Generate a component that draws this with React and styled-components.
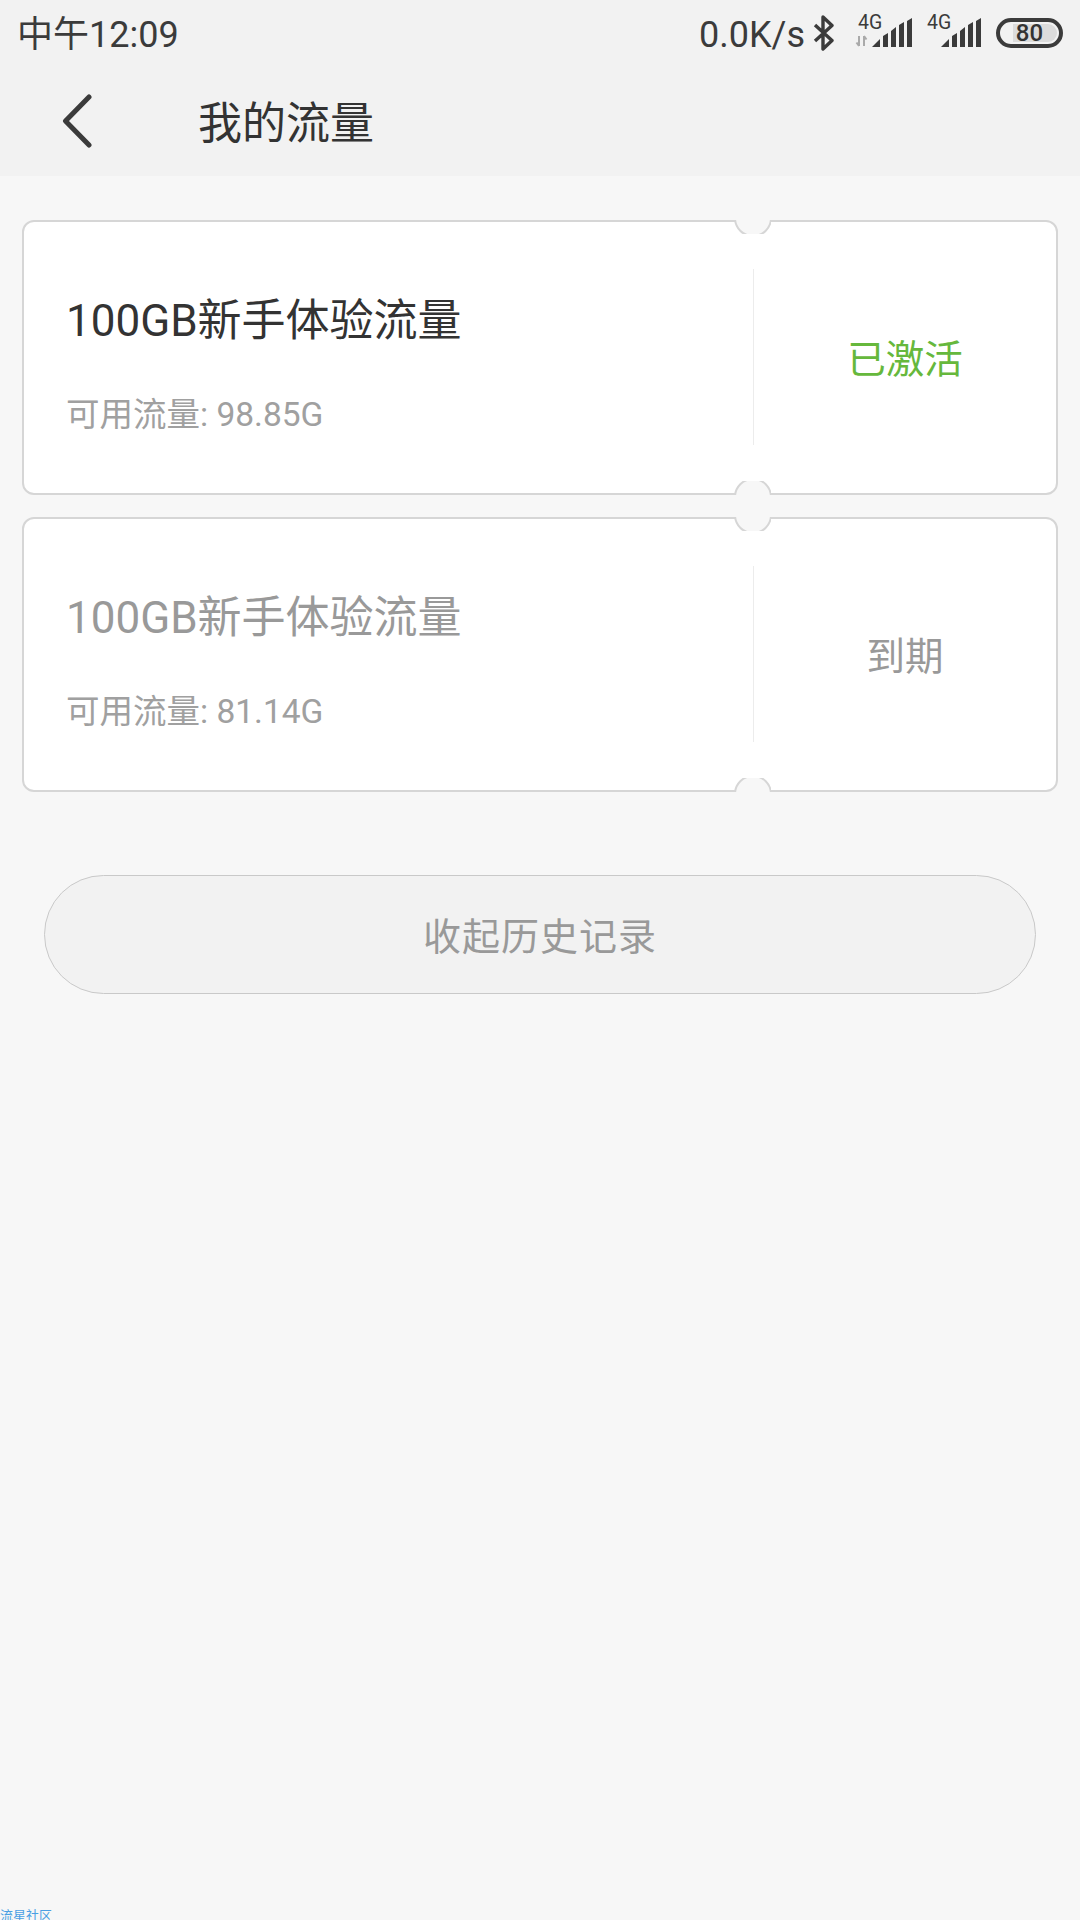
import React from 'react'
import styled, { createGlobalStyle } from 'styled-components'

const GlobalStyle = createGlobalStyle`
  html, body {
    margin: 0;
    padding: 0;
    background: #f7f7f7;
  }
  * {
    box-sizing: border-box;
  }
`

const Page = styled.div`
  width: 1080px;
  height: 1920px;
  overflow: hidden;
  display: flex;
  flex-direction: column;
  background: #f7f7f7;
  font-family: Roboto, 'Noto Sans CJK SC', sans-serif;
`

const Header = styled.header`
  height: 176px;
  background: #f2f2f2;
  flex-shrink: 0;
`

const StatusBar = styled.div`
  height: 70px;
  display: flex;
  align-items: center;
  padding: 0 17px 0 17px;
  color: #3b3b3b;
`

const Clock = styled.div`
  font-size: 36px;
  line-height: 70px;
  flex: 1;
`

const Speed = styled.div`
  font-size: 36px;
  line-height: 70px;
  margin-right: 7px;
`

const Bluetooth = styled.svg`
  margin: 0 0 4px;
  flex-shrink: 0;
`

const Cell = styled.div`
  position: relative;
  width: 58px;
  height: 32px;
  margin: 0 0 6px ${(p) => p.$gap}px;
`

const CellLabel = styled.span`
  position: absolute;
  left: 3px;
  top: -3px;
  font-size: 19.5px;
  line-height: 20px;
  color: #3b3b3b;
`

const Battery = styled.div`
  position: relative;
  width: 67px;
  height: 30px;
  margin: 0 0 4px 14px;
  border: 4px solid #3b3b3b;
  border-radius: 15px;
  display: flex;
  align-items: center;
  justify-content: center;
  font-size: 24px;
  font-weight: 500;
  color: #333;
`

const BatteryLevel = styled.div`
  position: absolute;
  left: 13px;
  top: 2px;
  bottom: 2px;
  right: 2px;
  background: #dcdcdc;
  border-radius: 0 10px 10px 0;
`

const BatteryText = styled.span`
  position: relative;
  line-height: 22px;
`

const NavBar = styled.div`
  height: 106px;
  display: flex;
  align-items: center;
  padding: 0 0 4px 62px;
`

const BackButton = styled.div`
  width: 136px;
  height: 60px;
  display: flex;
  align-items: center;
`

const NavTitle = styled.div`
  font-size: 44px;
  color: #333;
  position: relative;
  top: -1px;
`

const CardList = styled.div`
  display: flex;
  flex-direction: column;
  gap: 22px;
  padding: 44px 22px 0;
`

const Card = styled.div`
  position: relative;
  height: 275px;
  background: #fff;
  border: 2px solid #d6d6d6;
  border-radius: 12px;
  display: flex;
`

const Notch = styled.div`
  position: absolute;
  left: 707px;
  width: 40px;
  height: 14px;
  overflow: hidden;
  ${(p) => (p.$side === 'top' ? 'top: -2px;' : 'bottom: -2px;')}

  &::before {
    content: '';
    position: absolute;
    left: 3px;
    width: 34px;
    height: 34px;
    border-radius: 50%;
    background: #f7f7f7;
    border: 2px solid #d6d6d6;
    ${(p) => (p.$side === 'top' ? 'top: -21px;' : 'bottom: -21px;')}
  }
`

const CardMain = styled.div`
  width: 730px;
  padding: 73px 0 0 42px;
  position: relative;

  &::after {
    content: '';
    position: absolute;
    right: 0;
    top: 47px;
    bottom: 48px;
    width: 1px;
    background: #ececec;
  }
`

const CardTitle = styled.div`
  font-size: 44px;
  line-height: 52px;
  color: ${(p) => (p.$dim ? '#999' : '#333')};
`

const CardUsage = styled.div`
  margin-top: 48px;
  font-size: 33.5px;
  line-height: 40px;
  color: #a0a0a0;
`

const CardStatus = styled.div`
  flex: 1;
  display: flex;
  align-items: center;
  justify-content: center;
  font-size: 38.5px;
  padding-bottom: 3px;
  color: ${(p) => (p.$active ? '#66b83c' : '#999')};
`

const HistoryButton = styled.div`
  margin: 83px 44px 0;
  height: 119px;
  flex-shrink: 0;
  border: 1px solid #c9c9c9;
  border-radius: 60px;
  background: #f2f2f2;
  display: flex;
  align-items: center;
  justify-content: center;
  padding-bottom: 2px;
  font-size: 38px;
  letter-spacing: 1px;
  color: #999;
`

const Watermark = styled.div`
  margin-top: auto;
  height: 12px;
  font-size: 13px;
  line-height: 16px;
  color: #4a9fe3;
  overflow: hidden;
`

const BluetoothIcon = () => (
  <Bluetooth width='22' height='36' viewBox='0 0 22 36' fill='none'>
    <path d='M3 10 L20 25.5 L11 34 V2 L20 10.5 L3 26' stroke='#3b3b3b' strokeWidth='3.4' strokeLinejoin='round' />
  </Bluetooth>
)

const SignalIcon = ({ arrows }) => (
  <svg width='58' height='32' viewBox='0 0 58 32'>
    <path
      d='M17 31 L25 23 V31 Z M28 31 V20 L33 17 V31 Z M36 31 V15 L41 11 V31 Z M44 31 V9 L49 6 V31 Z M52 31 V5 L57 2 V31 Z'
      fill='#3b3b3b'
    />
    {arrows && (
      <path d='M4 20 V30 M1.5 26.5 L4 30 L4 30 M9 30 V20 M9 20 L11.5 23.5' stroke='#aaa' strokeWidth='2' fill='none' />
    )}
  </svg>
)

const BackIcon = () => (
  <svg width='32' height='54' viewBox='0 0 32 54' fill='none'>
    <path d='M27 3 L3.5 27 L27 51' stroke='#3b3b3b' strokeWidth='5' strokeLinecap='round' strokeLinejoin='round' />
  </svg>
)

const plans = [
  { id: 1, usage: '98.85G', status: '已激活', active: true },
  { id: 2, usage: '81.14G', status: '到期', active: false },
]

const App = () => (
  <Page>
    <GlobalStyle />
    <Header>
      <StatusBar>
        <Clock>中午12:09</Clock>
        <Speed>0.0K/s</Speed>
        <BluetoothIcon />
        <Cell $gap={21}>
          <SignalIcon arrows />
          <CellLabel>4G</CellLabel>
        </Cell>
        <Cell $gap={11}>
          <SignalIcon />
          <CellLabel>4G</CellLabel>
        </Cell>
        <Battery>
          <BatteryLevel />
          <BatteryText>80</BatteryText>
        </Battery>
      </StatusBar>
      <NavBar>
        <BackButton>
          <BackIcon />
        </BackButton>
        <NavTitle>我的流量</NavTitle>
      </NavBar>
    </Header>
    <CardList>
      {plans.map((plan) => (
        <Card key={plan.id}>
          <Notch $side='top' />
          <Notch $side='bottom' />
          <CardMain>
            <CardTitle $dim={!plan.active}>100GB新手体验流量</CardTitle>
            <CardUsage>可用流量: {plan.usage}</CardUsage>
          </CardMain>
          <CardStatus $active={plan.active}>{plan.status}</CardStatus>
        </Card>
      ))}
    </CardList>
    <HistoryButton>收起历史记录</HistoryButton>
    <Watermark>流星社区</Watermark>
  </Page>
)

export default App
